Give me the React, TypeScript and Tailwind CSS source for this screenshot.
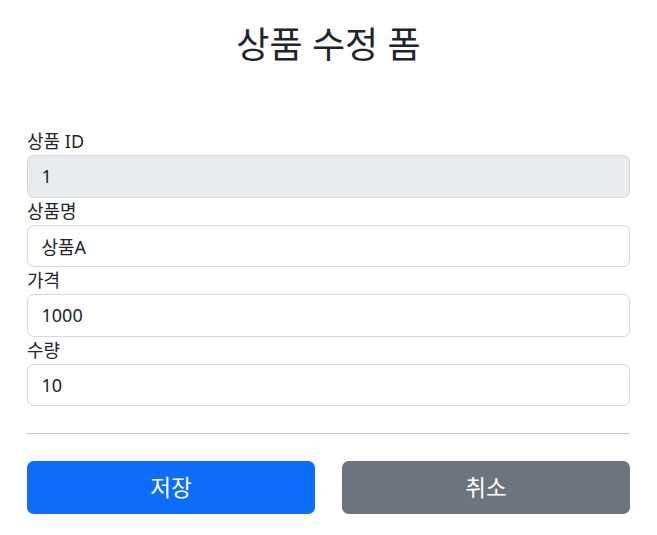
import React from "react";

const font = { fontFamily: '"Noto Sans", "Noto Sans CJK KR", sans-serif' };

function Field({ label, value, disabled }: { label: string; value: string; disabled?: boolean }) {
  return (
    <div className="flex flex-col">
      <label className="block h-[27px] text-[18px] leading-[27px] text-[#212529]">{label}</label>
      <input
        readOnly
        value={value}
        className={`block w-full h-[42.5px] px-[13.5px] text-[18px] leading-[27px] text-[#212529] border border-[#d4d7db] rounded-[6.75px] outline-none ${
          disabled ? "bg-[#e9ecef]" : "bg-white"
        }`}
        style={font}
      />
    </div>
  );
}

export default function App() {
  return (
    <div className="min-h-[535px] bg-white text-[#212529]" style={font}>
      <div className="mx-auto px-[27px]">
        <div className="pt-[23px] text-center">
          <h2 className="text-[36px] leading-[43px] font-normal text-[#212529]">상품 수정 폼</h2>
        </div>
        <form className="mt-[62px]">
          <Field label="상품 ID" value="1" disabled />
          <Field label="상품명" value="상품A" />
          <Field label="가격" value="1000" />
          <Field label="수량" value="10" />
          <hr className="mt-[27px] border-0 border-t border-[#c8c8c8]" />
          <div className="mt-[27px] grid grid-cols-2 gap-[27px]">
            <button
              type="button"
              className="h-[53px] rounded-[6.75px] bg-[#0d6efd] text-white text-[22.5px] leading-[33px]"
              style={font}
            >
              저장
            </button>
            <button
              type="button"
              className="h-[53px] rounded-[6.75px] bg-[#6c757d] text-white text-[22.5px] leading-[33px]"
              style={font}
            >
              취소
            </button>
          </div>
        </form>
      </div>
    </div>
  );
}
